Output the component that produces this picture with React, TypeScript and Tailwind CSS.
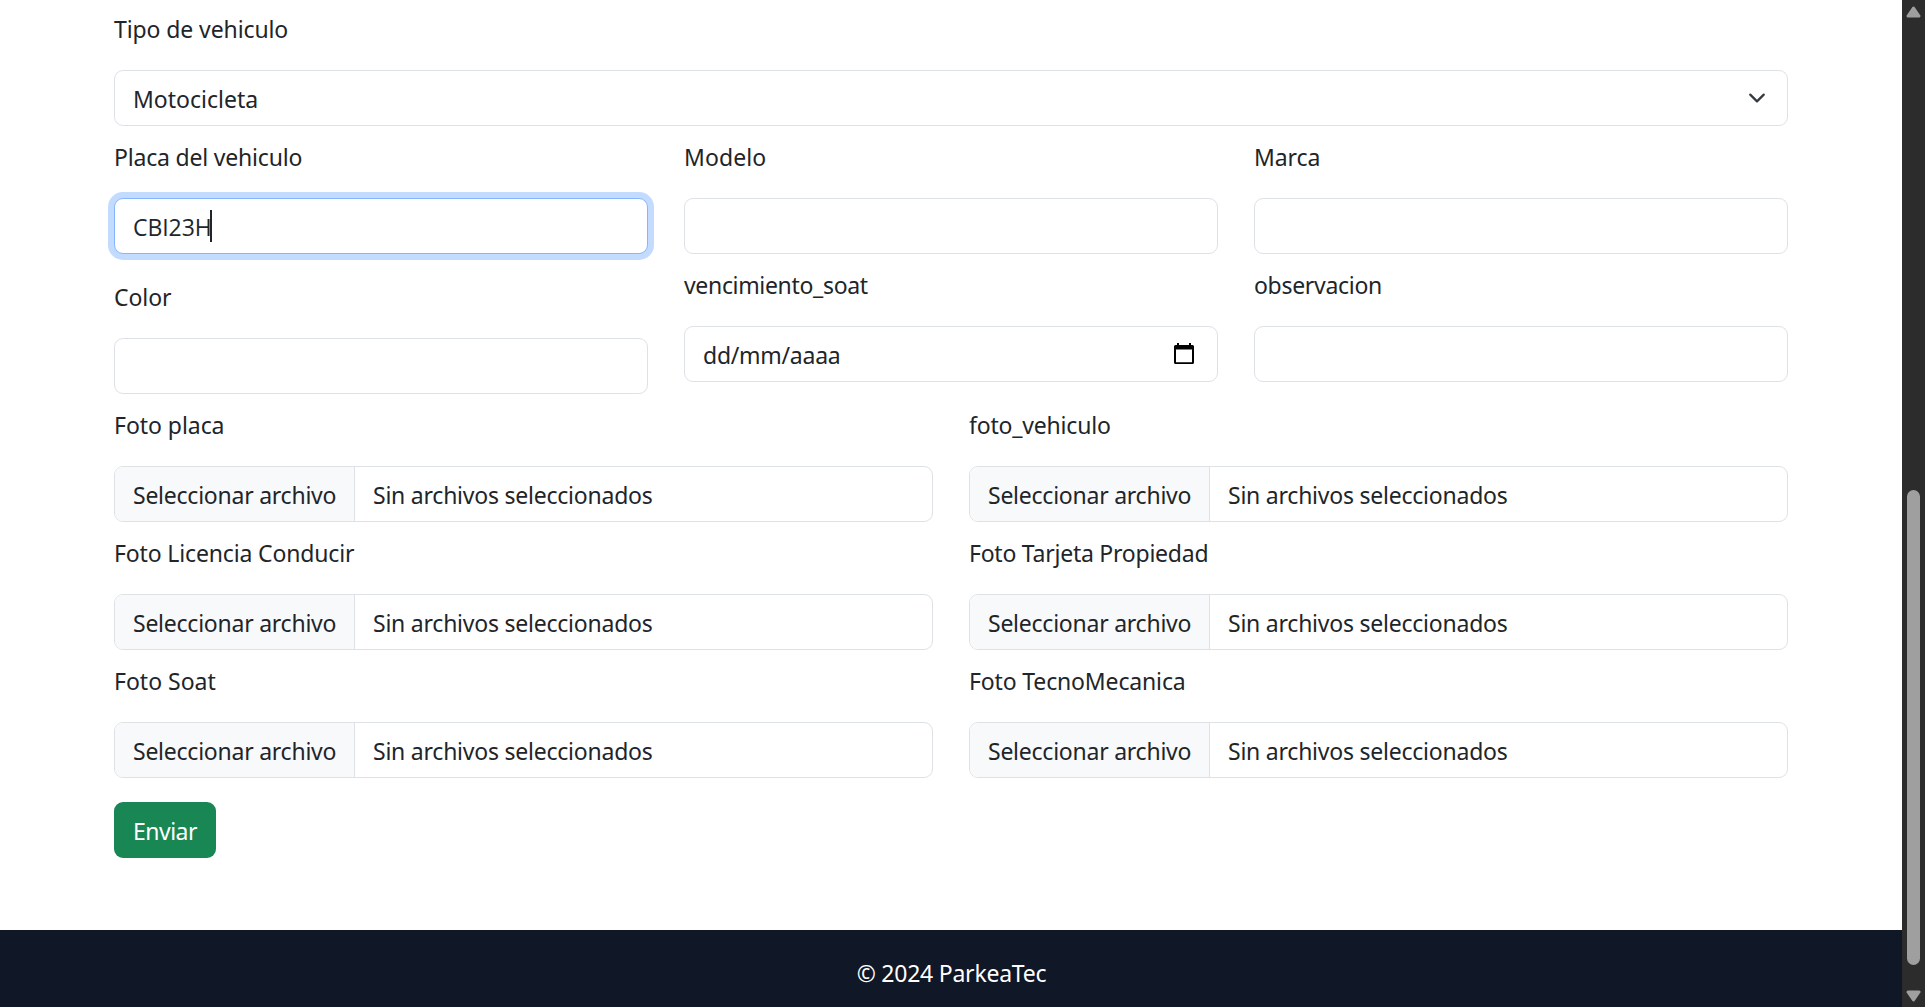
import type { ReactNode } from "react";

const BOX = "flex h-14 w-full items-center rounded-[9px] border border-[#dee2e6] bg-white";

function Text({ children, tracking = "" }: { children: ReactNode; tracking?: string }) {
  return <span className={`block h-9 leading-[38px] whitespace-nowrap ${tracking}`}>{children}</span>;
}

function Field({
  label,
  tracking,
  className = "",
  children,
}: {
  label: string;
  tracking: string;
  className?: string;
  children: ReactNode;
}) {
  return (
    <div className={`flex flex-col gap-6 ${className}`}>
      <label>
        <Text tracking={tracking}>{label}</Text>
      </label>
      {children}
    </div>
  );
}

function FileInput() {
  return (
    <div className={`${BOX} overflow-hidden`}>
      <div className="flex h-full w-[240px] shrink-0 items-center border-r border-[#dee2e6] bg-[#f8f9fa] pl-[18px]">
        <Text tracking="tracking-[-0.24px]">Seleccionar archivo</Text>
      </div>
      <div className="pl-[18px]">
        <Text tracking="tracking-[-0.23px]">Sin archivos seleccionados</Text>
      </div>
    </div>
  );
}

function Chevron() {
  return (
    <svg className="mr-[3px] size-[18px]" viewBox="0 0 16 16" fill="none">
      <path d="m2 5 6 6 6-6" stroke="#343a40" strokeWidth="2" strokeLinecap="round" strokeLinejoin="round" />
    </svg>
  );
}

function CalendarIcon() {
  return (
    <svg className="mb-px h-[21px] w-5" viewBox="0 0 20 21">
      <path
        fill="#000"
        fillRule="evenodd"
        d="M3 0h2v2h10V0h2v2h1.5A1.500 1.500 0 0 1 20 3.500V19.500A1.500 1.500 0 0 1 18.500 21h-17A1.500 1.500 0 0 1 0 19.500V3.500A1.500 1.500 0 0 1 1.500 2H3zM2 6.500V19.200H18V6.500z"
      />
    </svg>
  );
}

function Scrollbar() {
  return (
    <div className="flex h-full w-[23px] shrink-0 flex-col items-center bg-[#2c2c2c] pt-[6px] pb-[5px]">
      <svg className="h-3 w-[15px] shrink-0" viewBox="0 0 15 12">
        <path d="M7.500 2 13 10H2z" fill="#9f9f9f" stroke="#9f9f9f" strokeWidth="3" strokeLinejoin="round" />
      </svg>
      <div className="mt-[472px] h-[475px] w-[13px] shrink-0 rounded-full bg-[#9f9f9f]" />
      <svg className="mt-auto h-3 w-[15px] shrink-0" viewBox="0 0 15 12">
        <path d="M7.500 10 13 2H2z" fill="#9f9f9f" stroke="#9f9f9f" strokeWidth="3" strokeLinejoin="round" />
      </svg>
    </div>
  );
}

export default function App() {
  return (
    <div className="flex h-[1007px] w-[1925px] overflow-hidden bg-white font-['Noto_Sans',sans-serif] text-[23px] text-[#212529]">
      <div className="flex min-w-0 flex-1 flex-col">
        <main className="flex-1 px-[114px] pt-[10px]">
          <form className="flex flex-col gap-3">
            <Field label="Tipo de vehiculo" tracking="tracking-[-0.1px]">
              <div className={`${BOX} justify-between px-[18px]`}>
                <Text>Motocicleta</Text>
                <Chevron />
              </div>
            </Field>

            <div className="grid grid-cols-3 gap-x-9">
              <div className="flex flex-col gap-6">
                <Field label="Placa del vehiculo" tracking="tracking-[-0.19px]">
                  <div className="flex h-14 w-full items-center rounded-[9px] border border-[#86b7fe] bg-white px-[18px] font-['Open_Sans',sans-serif] shadow-[0_0_0_6px_#c2dbfe]">
                    <Text tracking="tracking-[-0.05px]">CBI23H</Text>
                    <span className="-ml-[2px] h-8 w-[2px] bg-[#212529]" />
                  </div>
                </Field>
                <Field label="Color" tracking="tracking-[-0.05px]">
                  <div className={BOX} />
                </Field>
              </div>
              <div className="flex flex-col gap-3">
                <Field label="Modelo" tracking="tracking-[0.1px]">
                  <div className={BOX} />
                </Field>
                <Field label="vencimiento_soat" tracking="tracking-[-0.33px]">
                  <div className={`${BOX} justify-between pr-[23px] pl-[18px]`}>
                    <Text tracking="tracking-[-0.26px]">dd/mm/aaaa</Text>
                    <CalendarIcon />
                  </div>
                </Field>
              </div>
              <div className="flex flex-col gap-3">
                <Field label="Marca" tracking="tracking-[-0.1px]">
                  <div className={BOX} />
                </Field>
                <Field label="observacion" tracking="tracking-[-0.3px]">
                  <div className={BOX} />
                </Field>
              </div>
            </div>

            <div className="grid grid-cols-2 gap-x-9 gap-y-3">
              <Field label="Foto placa" tracking="tracking-[-0.05px]">
                <FileInput />
              </Field>
              <Field label="foto_vehiculo" tracking="tracking-[-0.19px]">
                <FileInput />
              </Field>
              <Field label="Foto Licencia Conducir" tracking="tracking-[-0.15px]">
                <FileInput />
              </Field>
              <Field label="Foto Tarjeta Propiedad" tracking="tracking-[-0.24px]">
                <FileInput />
              </Field>
              <Field label="Foto Soat" tracking="tracking-normal">
                <FileInput />
              </Field>
              <Field label="Foto TecnoMecanica" tracking="tracking-[-0.15px]">
                <FileInput />
              </Field>
            </div>

            <button
              type="button"
              className="mt-3 flex h-14 w-[102px] items-center rounded-[9px] bg-[#198754] pl-[19px] text-white"
            >
              <Text tracking="tracking-[-0.5px]">Enviar</Text>
            </button>
          </form>
        </main>
        <footer className="flex h-[77px] justify-center bg-[#101726] pt-6 pl-px text-white">
          <Text tracking="tracking-[-0.23px]">© 2024 ParkeaTec</Text>
        </footer>
      </div>
      <Scrollbar />
    </div>
  );
}
